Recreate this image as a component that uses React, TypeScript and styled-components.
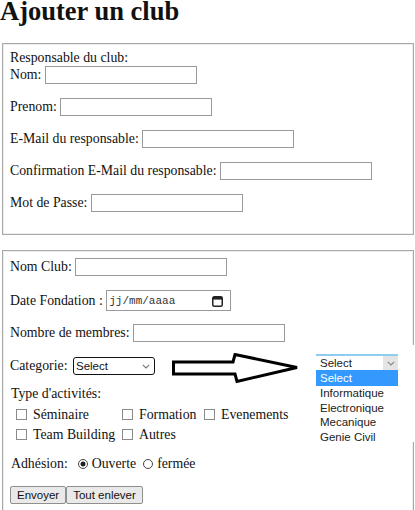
import React from 'react';
import styled, { createGlobalStyle } from 'styled-components';

const Global = createGlobalStyle`
  html, body { margin: 0; padding: 0; background: #fff; }
  body {
    font-family: "Liberation Serif", "Times New Roman", serif;
    font-size: 13.8px;
    color: #111;
  }
  * { box-sizing: border-box; }
`;

const Page = styled.div`
  position: relative;
  width: 415px;
`;

const Title = styled.h1`
  margin: 0 0 21px 0;
  font-size: 26.5px;
  line-height: 22px;
  font-weight: bold;
  white-space: nowrap;
`;

const Box = styled.fieldset<{ $top: number; $pt: number; $pb: number }>`
  margin: ${(p) => p.$top}px 1px 0 2px;
  padding: ${(p) => p.$pt + 1}px 7px ${(p) => p.$pb + 1}px 7px;
  border: 1px solid #a9a9a9;
  box-shadow: inset 0 0 0 1px #ececec;
  display: flex;
  flex-direction: column;
  min-width: 0;
`;

const Line = styled.div<{ $top?: number; $left?: number }>`
  height: 16px;
  line-height: 16px;
  white-space: nowrap;
  margin-top: ${(p) => p.$top ?? 0}px;
  padding-left: ${(p) => p.$left ?? 0}px;
`;

const Row = styled.div<{ $top: number; $gap?: number }>`
  display: flex;
  align-items: center;
  gap: ${(p) => p.$gap ?? 3.5}px;
  margin-top: ${(p) => p.$top}px;
  line-height: 16px;
  white-space: nowrap;
`;

const TextInput = styled.input`
  width: 152px;
  height: 18px;
  margin: 0;
  padding: 0 2px;
  border: 1px solid #9a9a9a;
  background: #fff;
  font: inherit;
  flex: none;
`;

const DateBox = styled.div`
  width: 125px;
  height: 21px;
  border: 1px solid #9a9a9a;
  display: flex;
  align-items: center;
  justify-content: space-between;
  padding: 0 7px 0 2px;
  font-family: "Liberation Mono", "Courier New", monospace;
  font-size: 11px;
  color: #333;
  flex: none;
`;

const SelectBox = styled.div<{ $w: number }>`
  width: ${(p) => p.$w}px;
  height: 18px;
  border: 1.5px solid #111;
  border-radius: 3px;
  display: flex;
  align-items: center;
  justify-content: space-between;
  padding: 0 4px 0 2px;
  font-family: "Liberation Sans", Arial, sans-serif;
  font-size: 11.5px;
  color: #111;
  margin-left: 2px;
  flex: none;
`;

const ActivityGrid = styled.div`
  display: grid;
  grid-template-columns: 106px 82px auto;
  grid-auto-rows: 20px;
  margin-top: 3px;
  padding-left: 6px;
`;

const CheckItem = styled.label`
  display: flex;
  align-items: center;
  gap: 6px;
  white-space: nowrap;
  line-height: 16px;
`;

const Check = styled.input.attrs({ type: 'checkbox' })`
  appearance: none;
  -webkit-appearance: none;
  width: 11px;
  height: 11px;
  margin: 0;
  border: 1px solid #8a8a8a;
  background: #fff;
  flex: none;
`;

const RadioItem = styled.label`
  display: flex;
  align-items: center;
  gap: 4px;
  white-space: nowrap;
`;

const Radio = styled.input.attrs({ type: 'radio', name: 'adhesion' })`
  appearance: none;
  -webkit-appearance: none;
  width: 10px;
  height: 10px;
  margin: 0;
  border: 1px solid #444;
  border-radius: 50%;
  background: #fff;
  flex: none;
  &:checked {
    background: radial-gradient(circle, #222 0 2.2px, #fff 2.8px);
  }
`;

const AdhesionLabel = styled.span`
  margin: 0 3px 0 1px;
`;

const Buttons = styled.div`
  display: flex;
  margin-top: 14px;
`;

const Btn = styled.button`
  height: 18px;
  margin: 0;
  padding: 0 6px;
  font-family: "Liberation Sans", Arial, sans-serif;
  font-size: 11.5px;
  line-height: 16px;
  color: #111;
  background: #e9e9e9;
  border: 1px solid #8f8f8f;
  border-radius: 2px;
`;

/* Annotation pasted over the form: arrow + open dropdown */
const Annotation = styled.div`
  position: absolute;
  left: 172px;
  top: 345px;
  display: flex;
  align-items: flex-start;
`;

const ArrowSvg = styled.svg`
  margin-top: 8px;
  flex: none;
`;

const DropPanel = styled.div`
  width: 116px;
  height: 97px;
  background: #fff;
  padding: 9px 0 0 17px;
  font-family: "Liberation Sans", Arial, sans-serif;
  font-size: 11.5px;
  color: #222;
`;

const DropHead = styled.div`
  width: 82px;
  height: 16px;
  border-top: 2px solid #8fcdf0;
  display: flex;
  align-items: stretch;
  justify-content: space-between;
  padding-left: 4px;
  line-height: 14px;
`;

const DropButton = styled.div`
  width: 15px;
  background: #e4e4e4;
  display: flex;
  align-items: center;
  justify-content: center;
`;

const DropList = styled.div`
  width: 82px;
  display: flex;
  flex-direction: column;
`;

const DropItem = styled.div<{ $active?: boolean }>`
  height: ${(p) => (p.$active ? 16 : 14.5)}px;
  line-height: ${(p) => (p.$active ? 16 : 14.5)}px;
  padding-left: 4px;
  background: ${(p) => (p.$active ? '#3399ff' : 'transparent')};
  color: ${(p) => (p.$active ? '#fff' : '#222')};
  white-space: nowrap;
`;

const Chevron = ({ color = '#777' }: { color?: string }) => (
  <svg width="8" height="5" viewBox="0 0 8 5">
    <polyline points="0.8,0.8 4,4 7.2,0.8" fill="none" stroke={color} strokeWidth="1.1" />
  </svg>
);

const CalendarIcon = () => (
  <svg width="11" height="12" viewBox="0 0 11 12">
    <rect x="0.75" y="1.75" width="9.5" height="9.5" rx="1.5" fill="none" stroke="#222" strokeWidth="1.5" />
    <rect x="1" y="2" width="9" height="2.6" fill="#222" />
  </svg>
);

const responsableFields = [
  'Nom:',
  'Prenom:',
  'E-Mail du responsable:',
  'Confirmation E-Mail du responsable:',
  'Mot de Passe:',
];

const categories = ['Informatique', 'Electronique', 'Mecanique', 'Genie Civil'];

export default function App() {
  return (
    <Page>
      <Global />
      <Title>Ajouter un club</Title>

      <Box $top={0} $pt={5} $pb={21}>
        <Line>Responsable du club:</Line>
        {responsableFields.map((label, i) => (
          <Row key={label} $top={i === 0 ? 0 : 14}>
            <span>{label}</span>
            <TextInput type={label === 'Mot de Passe:' ? 'password' : 'text'} />
          </Row>
        ))}
      </Box>

      <Box $top={15} $pt={6} $pb={14}>
        <Row $top={0}>
          <span>Nom Club:</span>
          <TextInput />
        </Row>
        <Row $top={14}>
          <span>Date Fondation :</span>
          <DateBox>
            <span>jj/mm/aaaa</span>
            <CalendarIcon />
          </DateBox>
        </Row>
        <Row $top={13}>
          <span>Nombre de membres:</span>
          <TextInput />
        </Row>
        <Row $top={15}>
          <span>Categorie:</span>
          <SelectBox $w={82}>
            <span>Select</span>
            <Chevron />
          </SelectBox>
        </Row>
        <Line $top={10.5} $left={1}>Type d'activités:</Line>
        <ActivityGrid>
          <CheckItem><Check />Séminaire</CheckItem>
          <CheckItem><Check />Formation</CheckItem>
          <CheckItem><Check />Evenements</CheckItem>
          <CheckItem><Check />Team Building</CheckItem>
          <CheckItem><Check />Autres</CheckItem>
        </ActivityGrid>
        <Row $top={11.5} $gap={7}>
          <AdhesionLabel>Adhésion:</AdhesionLabel>
          <RadioItem><Radio defaultChecked />Ouverte</RadioItem>
          <RadioItem><Radio />fermée</RadioItem>
        </Row>
        <Buttons>
          <Btn type="submit">Envoyer</Btn>
          <Btn type="reset">Tout enlever</Btn>
        </Buttons>
      </Box>

      <Annotation>
        <ArrowSvg width="127" height="31" viewBox="0 0 127 31">
          <path
            d="M1.5 9 L61 9 L63 1.5 L125 14.5 L65 28.5 L63 21 L1.5 21 Z"
            fill="#fff"
            stroke="#000"
            strokeWidth="3"
            strokeLinejoin="miter"
          />
        </ArrowSvg>
        <DropPanel>
          <DropHead>
            <span>Select</span>
            <DropButton>
              <Chevron color="#888" />
            </DropButton>
          </DropHead>
          <DropList>
            <DropItem $active>Select</DropItem>
            {categories.map((c) => (
              <DropItem key={c}>{c}</DropItem>
            ))}
          </DropList>
        </DropPanel>
      </Annotation>
    </Page>
  );
}
